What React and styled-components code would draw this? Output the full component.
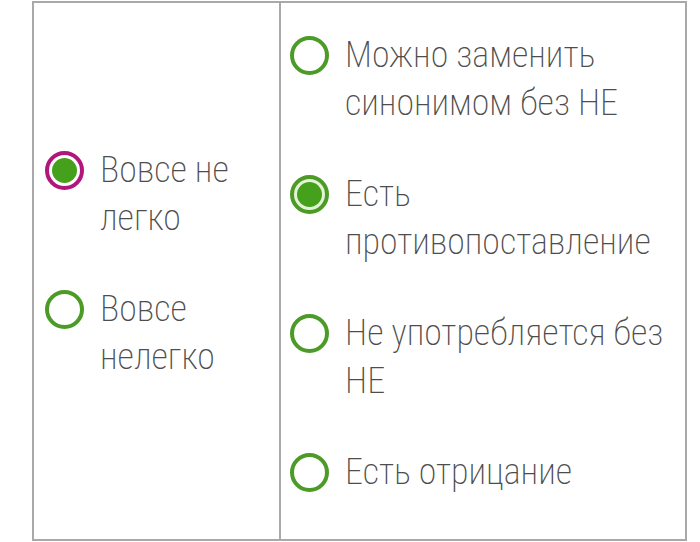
import React from 'react';
import styled, { createGlobalStyle } from 'styled-components';

const GlobalStyle = createGlobalStyle`
  body {
    margin: 0;
    background: #fff;
  }
`;

const leftOptions = [
  { text: 'Вовсе не легко', state: 'wrong' },
  { text: 'Вовсе нелегко', state: 'empty' },
];

const rightOptions = [
  { text: 'Можно заменить синонимом без НЕ', state: 'empty' },
  { text: 'Есть противопоставление', state: 'checked' },
  { text: 'Не употребляется без НЕ', state: 'empty' },
  { text: 'Есть отрицание', state: 'empty' },
];

const App = () => {
  return (
    <>
      <GlobalStyle />
      <StTable>
        <StCell $divider $padLeft={11}>
          {leftOptions.map(o => (
            <Option key={o.text} {...o} />
          ))}
        </StCell>
        <StCell $padLeft={9}>
          {rightOptions.map(o => (
            <Option key={o.text} {...o} />
          ))}
        </StCell>
      </StTable>
    </>
  );
};

const Option = ({ text, state }) => (
  <StOption>
    <StRadio $state={state}>{state !== 'empty' && <StDot />}</StRadio>
    <StLabel>{text}</StLabel>
  </StOption>
);

export default App;

const StTable = styled.div`
  display: grid;
  grid-template-columns: 247px 1fr;
  width: 655px;
  height: 540px;
  box-sizing: border-box;
  margin: 1px 0 0 32px;
  border: 2px solid #a9a9a9;
`;

const StCell = styled.div`
  display: flex;
  flex-direction: column;
  justify-content: center;
  gap: 43px;
  padding: 0 8px 16px ${p => p.$padLeft}px;
  border-right: ${p => (p.$divider ? '2px solid #a9a9a9' : 'none')};
`;

const StOption = styled.div`
  display: flex;
  align-items: flex-start;
  gap: 16px;
`;

const StRadio = styled.div`
  flex: none;
  width: 39px;
  height: 39px;
  margin-top: 5px;
  box-sizing: border-box;
  border-radius: 50%;
  border: 4px solid ${p => (p.$state === 'wrong' ? '#b1167c' : '#4c9b27')};
  background: ${p => (p.$state === 'checked' ? '#e2f3d6' : '#fff')};
  display: flex;
  align-items: center;
  justify-content: center;
`;

const StDot = styled.div`
  width: 25px;
  height: 25px;
  border-radius: 50%;
  background: #45a11c;
`;

const StLabel = styled.div`
  font-family: Roboto, 'Noto Sans', sans-serif;
  font-weight: 200;
  font-stretch: condensed;
  font-size: 36px;
  line-height: 48px;
  color: #4d4d4d;
`;
